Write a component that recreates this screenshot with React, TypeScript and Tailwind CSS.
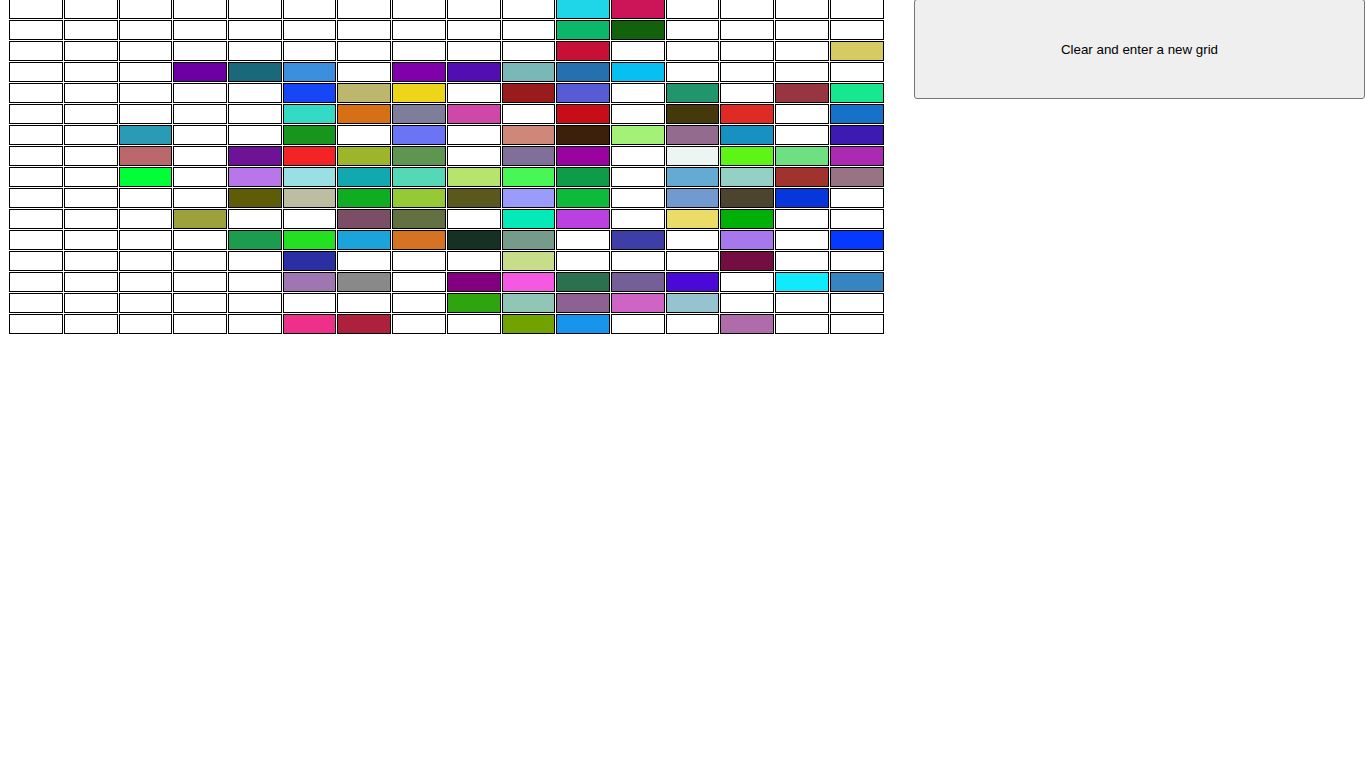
const COLS = 16;
const ROWS = 16;

// filled cells, keyed "row-col"
const FILLED: Record<string, string> = {
  '0-10': 'bg-[#1ed6e8]', '0-11': 'bg-[#cc1559]',
  '1-10': 'bg-[#0bb86a]', '1-11': 'bg-[#11620a]',
  '2-10': 'bg-[#c80f35]', '2-15': 'bg-[#d6ca62]',
  '3-3': 'bg-[#6d00a2]', '3-4': 'bg-[#1a697b]', '3-5': 'bg-[#3c8fdd]', '3-7': 'bg-[#8000ab]',
  '3-8': 'bg-[#520eb2]', '3-9': 'bg-[#7ab8b8]', '3-10': 'bg-[#2670b0]', '3-11': 'bg-[#06c0f2]',
  '4-5': 'bg-[#1646f5]', '4-6': 'bg-[#bdb66f]', '4-7': 'bg-[#edd61a]', '4-9': 'bg-[#981c1c]',
  '4-10': 'bg-[#575bd5]', '4-12': 'bg-[#21966d]', '4-14': 'bg-[#973641]', '4-15': 'bg-[#17e88f]',
  '5-5': 'bg-[#33dbc6]', '5-6': 'bg-[#d66f15]', '5-7': 'bg-[#7e7e9c]', '5-8': 'bg-[#d047aa]',
  '5-10': 'bg-[#c80c18]', '5-12': 'bg-[#45380a]', '5-13': 'bg-[#e02b24]', '5-15': 'bg-[#1572c8]',
  '6-2': 'bg-[#2a9ab5]', '6-5': 'bg-[#18951c]', '6-7': 'bg-[#6a74f5]', '6-9': 'bg-[#cf877a]',
  '6-10': 'bg-[#3d200c]', '6-11': 'bg-[#a3f277]', '6-12': 'bg-[#926b8f]', '6-13': 'bg-[#1791c1]',
  '6-15': 'bg-[#3d1ab1]',
  '7-2': 'bg-[#bb686c]', '7-4': 'bg-[#6e1398]', '7-5': 'bg-[#f22426]', '7-6': 'bg-[#9cb52a]',
  '7-7': 'bg-[#5e9651]', '7-9': 'bg-[#806f99]', '7-10': 'bg-[#9903a2]', '7-12': 'bg-[#ecf5f1]',
  '7-13': 'bg-[#5cf515]', '7-14': 'bg-[#6ee082]', '7-15': 'bg-[#ab29b3]',
  '8-2': 'bg-[#00ff37]', '8-4': 'bg-[#b975ea]', '8-5': 'bg-[#9adfe4]', '8-6': 'bg-[#11a8b0]',
  '8-7': 'bg-[#55d8b5]', '8-8': 'bg-[#b7e46d]', '8-9': 'bg-[#48f655]', '8-10': 'bg-[#0f9c48]',
  '8-12': 'bg-[#64aad3]', '8-13': 'bg-[#95d0c7]', '8-14': 'bg-[#a0332d]', '8-15': 'bg-[#977383]',
  '9-4': 'bg-[#5e5c06]', '9-5': 'bg-[#bdbda1]', '9-6': 'bg-[#10ad22]', '9-7': 'bg-[#95ca36]',
  '9-8': 'bg-[#5a581a]', '9-9': 'bg-[#9b9bfb]', '9-10': 'bg-[#0dba39]', '9-12': 'bg-[#709ad0]',
  '9-13': 'bg-[#4d4430]', '9-14': 'bg-[#0636dc]',
  '10-3': 'bg-[#9ca13b]', '10-6': 'bg-[#7b4e66]', '10-7': 'bg-[#637142]', '10-9': 'bg-[#04e9b8]',
  '10-10': 'bg-[#bb40e0]', '10-12': 'bg-[#ebdc68]', '10-13': 'bg-[#01b006]',
  '11-4': 'bg-[#1a9d4e]', '11-5': 'bg-[#23e021]', '11-6': 'bg-[#1ba4dc]', '11-7': 'bg-[#d57323]',
  '11-8': 'bg-[#153025]', '11-9': 'bg-[#769b8b]', '11-11': 'bg-[#3e3ea8]', '11-13': 'bg-[#a777ee]',
  '11-15': 'bg-[#0639fe]',
  '12-5': 'bg-[#2a2fa3]', '12-9': 'bg-[#c8dd8a]', '12-13': 'bg-[#740d42]',
  '13-5': 'bg-[#9f76b1]', '13-6': 'bg-[#898989]', '13-8': 'bg-[#82007f]', '13-9': 'bg-[#f558e1]',
  '13-10': 'bg-[#2a7150]', '13-11': 'bg-[#746096]', '13-12': 'bg-[#4a09d7]', '13-14': 'bg-[#0feafc]',
  '13-15': 'bg-[#3685c0]',
  '14-8': 'bg-[#2ea410]', '14-9': 'bg-[#91c5b6]', '14-10': 'bg-[#8e6193]', '14-11': 'bg-[#d064c4]',
  '14-12': 'bg-[#95c3d0]',
  '15-5': 'bg-[#ee308b]', '15-6': 'bg-[#ad213d]', '15-9': 'bg-[#71a200]', '15-10': 'bg-[#1795ed]',
  '15-13': 'bg-[#b06bab]',
};

function Grid() {
  const cells = [];
  for (let r = 0; r < ROWS; r++) {
    for (let c = 0; c < COLS; c++) {
      const key = `${r}-${c}`;
      cells.push(
        <div key={key} className={`h-5 border border-black ${FILLED[key] || 'bg-white'}`} />
      );
    }
  }
  return (
    <div className="ml-[9px] grid w-[875px] shrink-0 grid-cols-[54px_54px_53px_54px_54px_53px_54px_54px_54px_53px_54px_54px_53px_54px_54px_54px] gap-px">
      {cells}
    </div>
  );
}

export default function App() {
  return (
    <div className="flex min-h-[767px] items-start bg-white -mt-px font-['Liberation_Sans',Arial,sans-serif]">
      <Grid />
      <button
        type="button"
        className="ml-[30px] h-[100px] w-[451px] shrink-0 rounded-[3px] border border-[#767676] bg-[#efefef] pt-[2px] text-[13.333px] text-black"
      >
        Clear and enter a new grid
      </button>
    </div>
  );
}
